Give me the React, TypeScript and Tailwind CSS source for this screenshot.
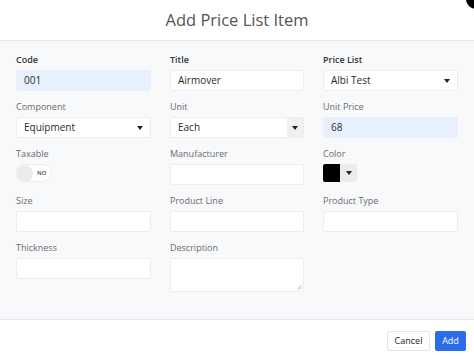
import React from "react";

const font = { fontFamily: "'Open Sans', 'Noto Sans', sans-serif" };

function Label({ children, bold }: { children: React.ReactNode; bold?: boolean }) {
  return (
    <div
      className={
        "h-[13px] leading-[12px] text-[9px] mb-[3px] " +
        (bold ? "font-semibold text-[#333]" : "text-[#6b6b6b]")
      }
    >
      {children}
    </div>
  );
}

function Input({ value, blue }: { value?: string; blue?: boolean }) {
  return (
    <div
      className={
        "h-[21px] border rounded-[2px] flex items-center px-[7px] text-[10px] text-[#2a2a2a] " +
        (blue ? "bg-[#e9f0fd] border-[#e9f0fd]" : "bg-white border-[#ebedf0]")
      }
    >
      {value}
    </div>
  );
}

function Caret() {
  return (
    <svg width="6" height="4" viewBox="0 0 6 4">
      <path d="M0 0 L6 0 L3 4 Z" fill="#222" />
    </svg>
  );
}

function Select({ value }: { value: string }) {
  return (
    <div className="h-[21px] border border-[#ebedf0] rounded-[2px] bg-white flex items-center justify-between pl-[7px] pr-[7px] text-[10px] text-[#2a2a2a]">
      <span>{value}</span>
      <Caret />
    </div>
  );
}

function Field({ label, bold, children }: { label: string; bold?: boolean; children: React.ReactNode }) {
  return (
    <div className="flex flex-col">
      <Label bold={bold}>{label}</Label>
      {children}
    </div>
  );
}

export default function App() {
  return (
    <div className="w-[474px] h-[359px] bg-white relative overflow-hidden flex flex-col" style={font}>
      <div className="absolute right-[-12px] top-[-11px] w-[20px] h-[20px] rounded-full bg-black" />
      <div className="h-[41px] shrink-0 border-b border-[#e6e8eb] flex items-center justify-center">
        <span className="text-[16.5px] text-[#555]">Add Price List Item</span>
      </div>
      <div className="h-[279px] shrink-0 bg-[#f8f9fb] border-b border-[#e6e8eb] px-[16px] pt-[13px]">
        <div className="grid grid-cols-[135px_134px_135px] gap-x-[19px] gap-y-[10px]">
          <Field label="Code" bold>
            <Input value="001" blue />
          </Field>
          <Field label="Title" bold>
            <Input value="Airmover" />
          </Field>
          <Field label="Price List" bold>
            <Select value="Albi Test" />
          </Field>

          <Field label="Component">
            <Select value="Equipment" />
          </Field>
          <Field label="Unit">
            <div className="h-[21px] border border-[#ebedf0] rounded-[2px] bg-white flex items-stretch text-[10px] text-[#2a2a2a]">
              <div className="flex-1 flex items-center pl-[7px]">Each</div>
              <div className="w-[16px] bg-[#f0f0f0] flex items-center justify-center">
                <Caret />
              </div>
            </div>
          </Field>
          <Field label="Unit Price">
            <Input value="68" blue />
          </Field>

          <Field label="Taxable">
            <div className="h-[21px] flex items-start">
              <div className="w-[36px] h-[18px] rounded-full bg-white border border-[#ececec] flex items-center">
                <div className="w-[17px] h-[17px] rounded-full bg-[#ececec] -ml-[1px]" />
                <span className="text-[6px] font-semibold text-[#444] ml-[4px]">NO</span>
              </div>
            </div>
          </Field>
          <Field label="Manufacturer">
            <Input />
          </Field>
          <Field label="Color">
            <div className="h-[21px] flex items-start">
              <div className="w-[34px] h-[18px] rounded-[2px] bg-[#ececec] flex items-center">
                <div className="w-[17px] h-[18px] bg-black rounded-l-[2px]" />
                <div className="flex-1 flex items-center justify-center">
                  <Caret />
                </div>
              </div>
            </div>
          </Field>

          <Field label="Size">
            <Input />
          </Field>
          <Field label="Product Line">
            <Input />
          </Field>
          <Field label="Product Type">
            <Input />
          </Field>

          <Field label="Thickness">
            <Input />
          </Field>
          <Field label="Description">
            <div className="h-[34px] border border-[#ebedf0] rounded-[2px] bg-white relative">
              <svg className="absolute right-[1px] bottom-[1px]" width="6" height="6" viewBox="0 0 6 6">
                <path d="M5.5 1 L1 5.5 M5.5 3.5 L3.5 5.5" stroke="#999" strokeWidth="0.7" />
              </svg>
            </div>
          </Field>
          <div />
        </div>
      </div>
      <div className="flex-1 flex items-center justify-end gap-[5px] pr-[8px] pt-[2px]">
        <button className="h-[20px] w-[43px] bg-white border border-[#e3e5e8] rounded-[2px] text-[9px] text-[#222]">
          Cancel
        </button>
        <button className="h-[20px] w-[31px] bg-[#2b6de8] rounded-[2px] text-[9px] text-white">Add</button>
      </div>
    </div>
  );
}
